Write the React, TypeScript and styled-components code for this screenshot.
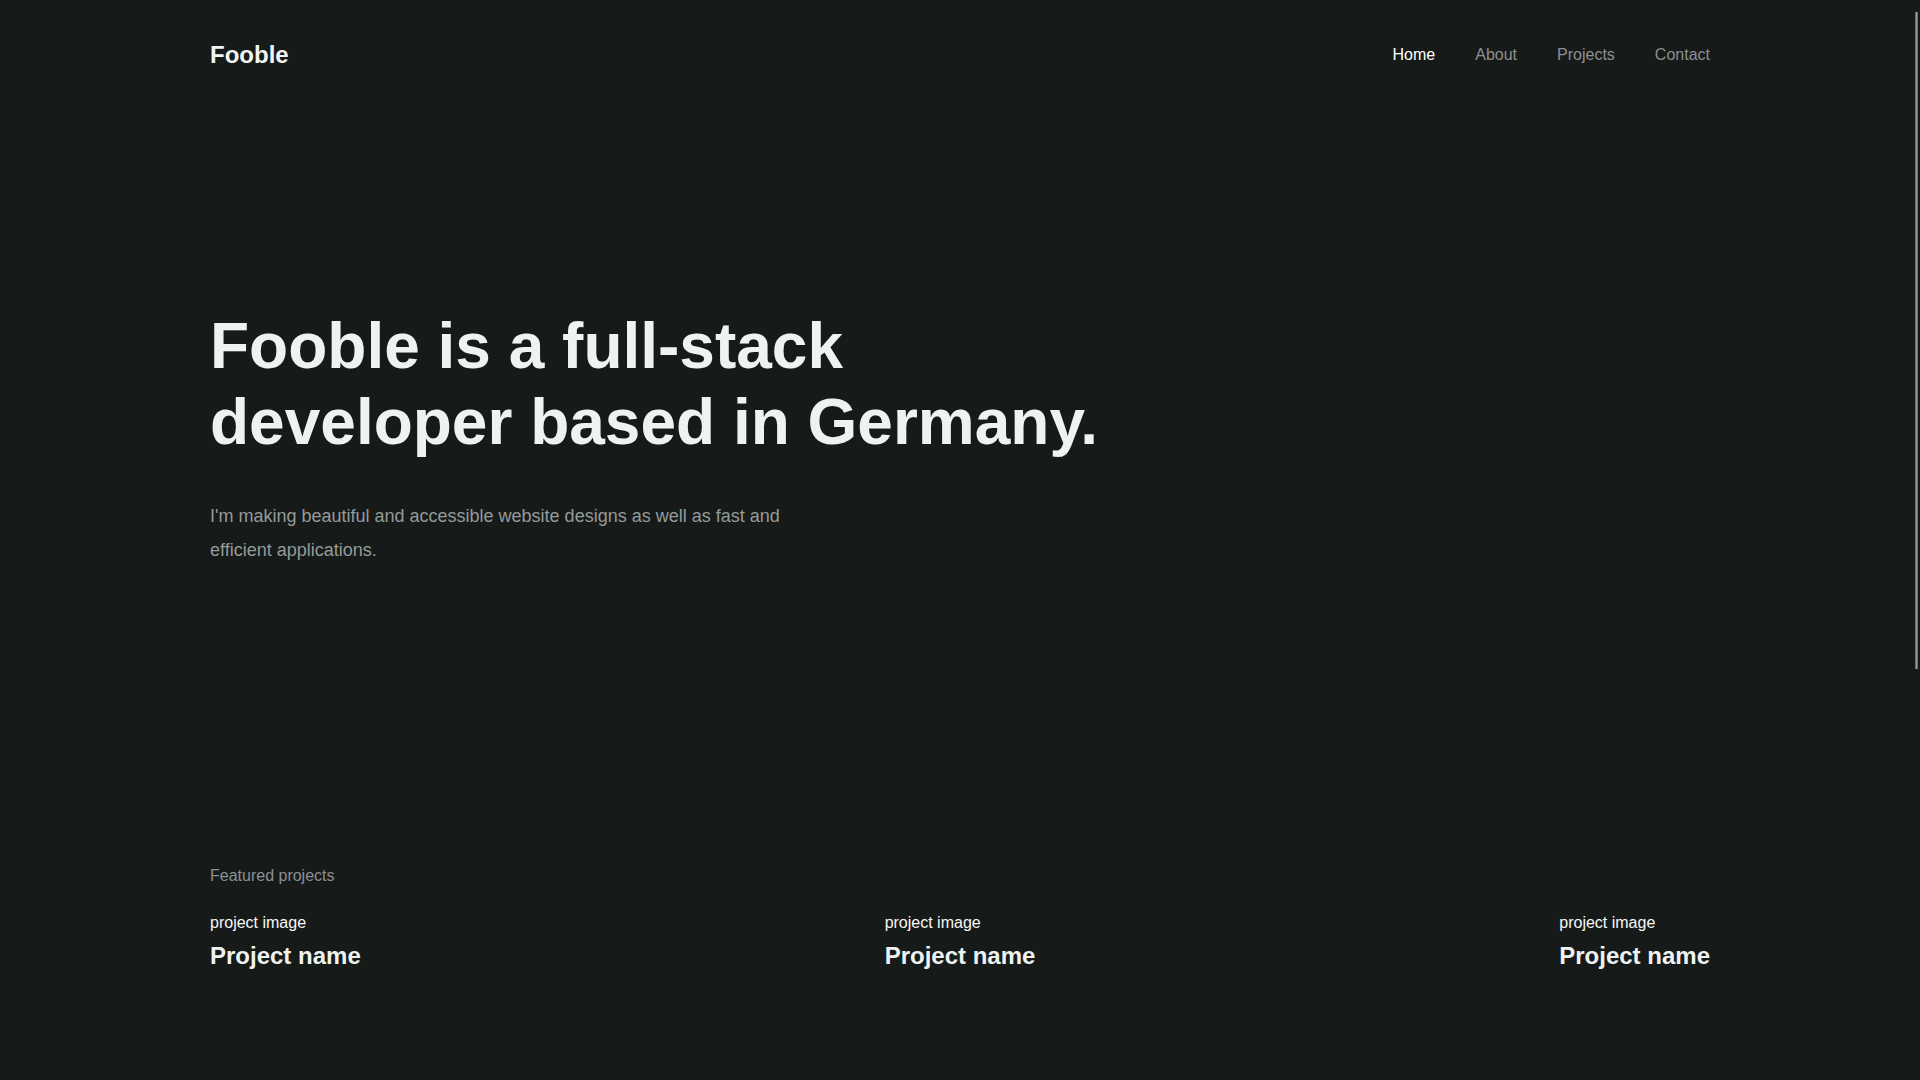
import React from "react";
import styled, { createGlobalStyle } from "styled-components";

const GlobalStyle = createGlobalStyle`
  html, body {
    margin: 0;
    padding: 0;
    background: #161a19;
  }
  html {
    scrollbar-width: none;
  }
  html::-webkit-scrollbar {
    display: none;
  }
  body {
    font-family: "Liberation Sans", Arial, Helvetica, sans-serif;
    color: #eef2f1;
  }
`;

const ScrollThumb = styled.div`
  position: fixed;
  top: 12px;
  right: 2px;
  width: 3px;
  height: 657px;
  background: #9a9a9a;
  box-shadow: inset 1px 0 0 #6f6f6f, inset -1px 0 0 #6f6f6f;
  z-index: 10;
`;

const Page = styled.div`
  max-width: 1500px;
  margin: 0 auto;
  padding-bottom: 769px;
`;

const Header = styled.header`
  display: flex;
  align-items: center;
  justify-content: space-between;
  padding: 41px 0 40px;
`;

const Logo = styled.a`
  font-size: 24px;
  font-weight: 700;
  line-height: 1.15;
  color: #f2f5f4;
  text-decoration: none;
`;

const Nav = styled.nav`
  display: flex;
  align-items: center;
  gap: 40px;
`;

const NavLink = styled.a<{ $active?: boolean }>`
  font-size: 16px;
  line-height: 1.15;
  text-decoration: none;
  color: ${(p) => (p.$active ? "#ffffff" : "#8b9090")};
`;

const Hero = styled.section`
  padding-top: 199px;
`;

const Title = styled.h1`
  margin: 0;
  font-size: 64px;
  font-weight: 700;
  line-height: 1.2;
  color: #eef2f1;
  max-width: 900px;
`;

const Lead = styled.p`
  margin: 38px 0 0;
  max-width: 600px;
  font-size: 18px;
  line-height: 1.9;
  color: #959a99;
`;

const Featured = styled.section`
  margin-top: 299px;
`;

const SectionLabel = styled.h2`
  margin: 0;
  font-size: 16px;
  font-weight: 400;
  line-height: 1.15;
  color: #8b9090;
`;

const ProjectRow = styled.div`
  display: flex;
  justify-content: space-between;
  margin-top: 29px;
`;

const ProjectCard = styled.article`
  display: flex;
  flex-direction: column;
  gap: 10px;
`;

const ProjectImage = styled.span`
  font-size: 16px;
  line-height: 1.15;
  color: #f7f7f7;
`;

const ProjectName = styled.h3`
  margin: 0;
  font-size: 24px;
  font-weight: 700;
  line-height: 1.15;
  color: #eef2f1;
`;

const projects = ["Project name", "Project name", "Project name"];

export default function App() {
  return (
    <>
      <GlobalStyle />
      <ScrollThumb aria-hidden />
      <Page>
        <Header>
          <Logo href="#">Fooble</Logo>
          <Nav>
            <NavLink href="#" $active>
              Home
            </NavLink>
            <NavLink href="#">About</NavLink>
            <NavLink href="#">Projects</NavLink>
            <NavLink href="#">Contact</NavLink>
          </Nav>
        </Header>
        <Hero>
          <Title>
            Fooble is a full-stack
            <br />
            developer based in Germany.
          </Title>
          <Lead>
            I'm making beautiful and accessible website designs as well as fast
            and efficient applications.
          </Lead>
        </Hero>
        <Featured>
          <SectionLabel>Featured projects</SectionLabel>
          <ProjectRow>
            {projects.map((name, i) => (
              <ProjectCard key={i}>
                <ProjectImage>project image</ProjectImage>
                <ProjectName>{name}</ProjectName>
              </ProjectCard>
            ))}
          </ProjectRow>
        </Featured>
      </Page>
    </>
  );
}
